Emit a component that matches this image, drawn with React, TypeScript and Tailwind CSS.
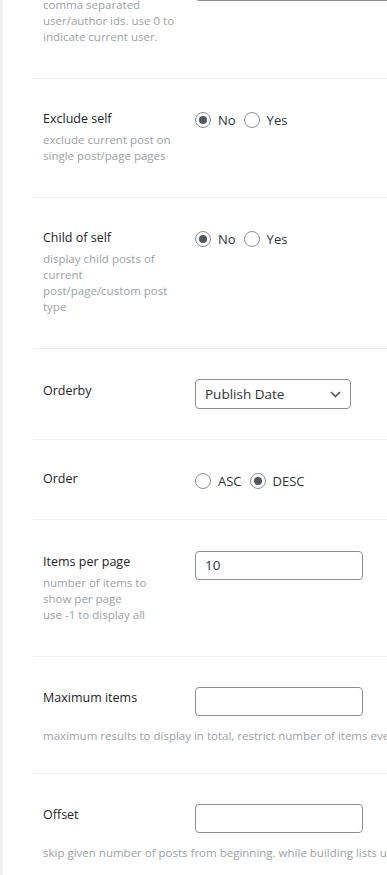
import React from "react";

const font = { fontFamily: '"Open Sans", "Noto Sans", Arial, sans-serif' };

function Radio({ checked, label }: { checked: boolean; label: string }) {
  return (
    <div className="flex items-center">
      <span className="flex h-[16px] w-[16px] items-center justify-center rounded-full border border-[#8c8f94] bg-white">
        {checked && <span className="h-[8px] w-[8px] rounded-full bg-[#50575e]" />}
      </span>
      <span className="ml-[7px] text-[13px] leading-[20px] text-[#2c3338]">{label}</span>
    </div>
  );
}

function Desc({ lines }: { lines: string[] }) {
  return (
    <div className="mt-[3px] text-[11.5px] leading-[16px] text-[#9ca1a6]">
      {lines.map((l) => (
        <div key={l}>{l}</div>
      ))}
    </div>
  );
}

function Label({ children }: { children: React.ReactNode }) {
  return <div className="text-[12.5px] leading-[20px] text-[#1d2327]">{children}</div>;
}

export default function App() {
  return (
    <div className="flex min-h-[875px] w-[387px] overflow-hidden bg-white" style={font}>
      <div className="w-[3px] shrink-0 bg-[#f0f0f1]" />
      <div className="flex-1 overflow-hidden">
        <div className="-mt-[56px]">
          {/* Row 0 (partially scrolled) */}
          <div className="ml-[30px] flex border-b border-[#f0f0f1] pl-[10px]">
            <div className="w-[152px] shrink-0 pt-[30px] pb-[33px]">
              <Label>Author</Label>
              <Desc lines={["comma separated", "user/author ids. use 0 to", "indicate current user."]} />
            </div>
            <div className="pt-[27px]">
              <div className="h-[30px] w-[240px] rounded-[4px] border border-[#8c8f94]" />
            </div>
          </div>

          {/* Exclude self */}
          <div className="ml-[30px] flex border-b border-[#f0f0f1] pl-[10px]">
            <div className="w-[152px] shrink-0 pt-[30px] pb-[33px]">
              <Label>Exclude self</Label>
              <Desc lines={["exclude current post on", "single post/page pages"]} />
            </div>
            <div className="box-content flex h-[20px] gap-[8px] pt-[31px]">
              <Radio checked label="No" />
              <Radio checked={false} label="Yes" />
            </div>
          </div>

          {/* Child of self */}
          <div className="ml-[30px] flex border-b border-[#f0f0f1] pl-[10px]">
            <div className="w-[152px] shrink-0 pt-[30px] pb-[33px]">
              <Label>Child of self</Label>
              <Desc lines={["display child posts of", "current", "post/page/custom post", "type"]} />
            </div>
            <div className="box-content flex h-[20px] gap-[8px] pt-[31px]">
              <Radio checked label="No" />
              <Radio checked={false} label="Yes" />
            </div>
          </div>

          {/* Orderby */}
          <div className="ml-[30px] flex border-b border-[#f0f0f1] pl-[10px]">
            <div className="w-[152px] shrink-0 pt-[32px]">
              <Label>Orderby</Label>
            </div>
            <div className="pt-[30px] pb-[30px]">
              <div className="flex h-[30px] w-[156px] items-center justify-between rounded-[4px] border border-[#8c8f94] pl-[9px] pr-[9px]">
                <span className="text-[13.5px] text-[#2c3338]">Publish Date</span>
                <svg width="11" height="7" viewBox="0 0 11 7" fill="none">
                  <path d="M1 1l4.5 4.5L10 1" stroke="#50575e" strokeWidth="1.6" />
                </svg>
              </div>
            </div>
          </div>

          {/* Order */}
          <div className="ml-[30px] flex border-b border-[#f0f0f1] pl-[10px]">
            <div className="w-[152px] shrink-0 pt-[29px] pb-[30px]">
              <Label>Order</Label>
            </div>
            <div className="box-content flex h-[20px] gap-[8px] pt-[31px]">
              <Radio checked={false} label="ASC" />
              <Radio checked label="DESC" />
            </div>
          </div>

          {/* Items per page */}
          <div className="ml-[30px] flex border-b border-[#f0f0f1] pl-[10px]">
            <div className="w-[152px] shrink-0 pt-[32px] pb-[33px]">
              <Label>Items per page</Label>
              <Desc lines={["number of items to", "show per page", "use -1 to display all"]} />
            </div>
            <div className="pt-[31px]">
              <div className="flex h-[29px] w-[168px] items-center rounded-[4px] border border-[#8c8f94] pl-[9px]">
                <span className="text-[13.5px] text-[#2c3338]">10</span>
              </div>
            </div>
          </div>

          {/* Maximum items */}
          <div className="ml-[30px] border-b border-[#f0f0f1] pl-[10px] pt-[30px] pb-[29px]">
            <div className="flex">
              <div className="w-[152px] shrink-0 pt-[1px]">
                <Label>Maximum items</Label>
              </div>
              <div className="h-[29px] w-[168px] rounded-[4px] border border-[#8c8f94]" />
            </div>
            <div className="mt-[12px] whitespace-nowrap text-[11.5px] leading-[16px] text-[#9ca1a6]">
              maximum results to display in total, restrict number of items every time
            </div>
          </div>

          {/* Offset */}
          <div className="ml-[30px] pl-[10px] pt-[30px] pb-[29px]">
            <div className="flex">
              <div className="w-[152px] shrink-0 pt-[1px]">
                <Label>Offset</Label>
              </div>
              <div className="h-[29px] w-[168px] rounded-[4px] border border-[#8c8f94]" />
            </div>
            <div className="mt-[12px] whitespace-nowrap text-[11.5px] leading-[16px] text-[#9ca1a6]">
              skip given number of posts from beginning. while building lists use it
            </div>
          </div>
        </div>
      </div>
    </div>
  );
}
